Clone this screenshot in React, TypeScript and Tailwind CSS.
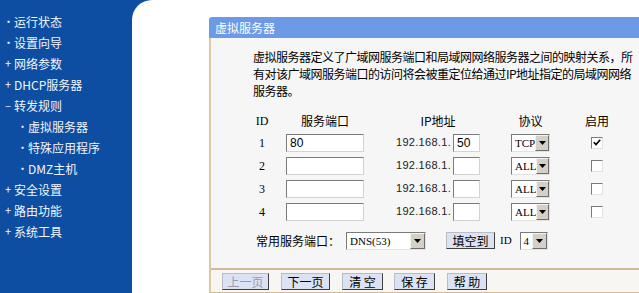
import React from 'react'

const font = { fontFamily: '"Noto Sans CJK SC", "Liberation Sans", sans-serif' }

// 左侧菜单
const menu: { mark: '•' | '+' | '-'; label: string; sub?: boolean }[] = [
  { mark: '•', label: '运行状态' },
  { mark: '•', label: '设置向导' },
  { mark: '+', label: '网络参数' },
  { mark: '+', label: 'DHCP服务器' },
  { mark: '-', label: '转发规则' },
  { mark: '•', label: '虚拟服务器', sub: true },
  { mark: '•', label: '特殊应用程序', sub: true },
  { mark: '•', label: 'DMZ主机', sub: true },
  { mark: '+', label: '安全设置' },
  { mark: '+', label: '路由功能' },
  { mark: '+', label: '系统工具' },
]

const rows = [
  { id: 1, port: '80', host: '50', proto: 'TCP', on: true },
  { id: 2, port: '', host: '', proto: 'ALL', on: false },
  { id: 3, port: '', host: '', proto: 'ALL', on: false },
  { id: 4, port: '', host: '', proto: 'ALL', on: false },
]

function TextBox({ value, className }: { value: string; className: string }) {
  return (
    <div
      className={`h-[18px] bg-white border border-t-[#7b7b7b] border-l-[#7b7b7b] border-b-[#d6d3ce] border-r-[#d6d3ce] px-[3px] text-[12px] leading-[16px] text-black ${className}`}
      style={{ fontFamily: '"Liberation Sans", sans-serif' }}
    >
      {value}
    </div>
  )
}

function Select({ value, className }: { value: string; className: string }) {
  return (
    <div
      className={`h-[18px] flex bg-white border border-t-[#7b7b7b] border-l-[#7b7b7b] border-b-[#e4e2de] border-r-[#e4e2de] ${className}`}
    >
      <div
        className="flex-1 pl-[3px] text-[11px] leading-[16px] text-black whitespace-nowrap"
        style={{ fontFamily: '"Liberation Serif", serif' }}
      >
        {value}
      </div>
      <div className="w-[15px] h-[16px] bg-[#d4d0c8] border border-t-[#f4f3f0] border-l-[#f4f3f0] border-b-[#6e6e6e] border-r-[#6e6e6e] flex items-center justify-center">
        <svg width="7" height="4" viewBox="0 0 7 4">
          <path d="M0 0 H7 L3.5 4 Z" fill="#000" />
        </svg>
      </div>
    </div>
  )
}

function CheckBox({ checked }: { checked: boolean }) {
  return (
    <div className="w-[12px] h-[12px] bg-white border border-t-[#7b7b7b] border-l-[#7b7b7b] border-b-[#e4e2de] border-r-[#e4e2de] flex items-center justify-center">
      {checked && (
        <svg width="8" height="7" viewBox="0 0 8 7">
          <path d="M0.8 3.2 L3 5.6 L7.2 0.8" stroke="#000" strokeWidth="1.6" fill="none" />
        </svg>
      )}
    </div>
  )
}

function Btn({ label, disabled, className }: { label: string; disabled?: boolean; className: string }) {
  return (
    <div
      className={`h-[17px] bg-[#dbe2f3] border border-t-[#b8bcc8] border-l-[#b8bcc8] border-b-[#3f3f3f] border-r-[#3f3f3f] text-[12px] leading-[15px] text-center whitespace-nowrap ${
        disabled ? 'text-[#9a9cab]' : 'text-black'
      } ${className}`}
    >
      {label}
    </div>
  )
}

export default function App() {
  return (
    <div className="w-[639px] h-[293px] flex bg-[#0d4ea3] overflow-hidden" style={font}>
      {/* Sidebar */}
      <div className="w-[132px] shrink-0 pt-[11px] text-[12px] leading-[21px] text-[#f2f5fb]">
        {menu.map(item => (
          <div key={item.label} className={`flex items-center whitespace-nowrap ${item.sub ? 'pl-[17px]' : 'pl-[3px]'}`}>
            <span className="w-[10px] text-center text-[11px]">{item.mark === '-' ? '–' : item.mark}</span>
            <span className="ml-[1px]">{item.label}</span>
          </div>
        ))}
      </div>

      {/* Main */}
      <div className="flex-1 bg-white rounded-tl-[20px] pl-[77px] pt-[17px] overflow-hidden">
        <div className="w-[460px]">
          <div className="h-[21px] bg-[#6c9ae6] rounded-tl-[3px] pl-[6px] text-[12px] leading-[21px] text-white">
            虚拟服务器
          </div>
          <div className="border-l-2 border-[#dcc8a3] bg-[#f6f6f6] text-[12px] text-black">
            <div className="pl-[42px] pt-[10px] leading-[17px] whitespace-nowrap tracking-[-0.5px]">
              虚拟服务器定义了广域网服务端口和局域网网络服务器之间的映射关系，所
              <br />
              有对该广域网服务端口的访问将会被重定位给通过IP地址指定的局域网网络
              <br />
              服务器。
            </div>

            {/* 表头 */}
            <div className="mt-[12px] h-[20px] flex items-center pl-[37px]">
              <div className="w-[28px] text-center" style={{ fontFamily: '"Liberation Serif", serif' }}>ID</div>
              <div className="ml-[10px] w-[78px] text-center">服务端口</div>
              <div className="ml-[32px] w-[84px] text-center">IP地址</div>
              <div className="ml-[31px] w-[39px] text-center">协议</div>
              <div className="ml-[34px] w-[26px] text-center">启用</div>
            </div>

            {rows.map(r => (
              <div key={r.id} className="h-[23px] flex items-center pl-[37px]">
                <div className="w-[28px] text-center" style={{ fontFamily: '"Liberation Serif", serif' }}>{r.id}</div>
                <TextBox value={r.port} className="ml-[10px] w-[78px]" />
                <div className="ml-[32px] w-[84px] flex items-center">
                  <span
                    className="w-[55px] whitespace-nowrap text-[11px] tracking-[0.3px] text-[#222]"
                    style={{ fontFamily: '"Liberation Sans", sans-serif' }}
                  >
                    192.168.1.
                  </span>
                  <TextBox value={r.host} className="ml-[2px] w-[27px]" />
                </div>
                <Select value={r.proto} className="ml-[31px] w-[39px]" />
                <div className="ml-[34px] w-[26px] flex justify-center">
                  <CheckBox checked={r.on} />
                </div>
              </div>
            ))}

            {/* 常用服务端口 */}
            <div className="mt-[6px] h-[23px] flex items-center pl-[45px]">
              <span className="w-[90px] whitespace-nowrap">常用服务端口：</span>
              <Select value="DNS(53)" className="w-[80px]" />
              <Btn label="填空到" className="ml-[20px] w-[49px]" />
              <span className="ml-[5px] text-[11px]" style={{ fontFamily: '"Liberation Serif", serif' }}>ID</span>
              <Select value="4" className="ml-[8px] w-[28px]" />
            </div>

            <div className="mt-[15px] h-[3px] bg-[#fdf6e8] border-b-2 border-[#d2ba97]" />

            <div className="h-[24px] flex items-center pl-[11px] bg-[#f7f6f3] border-b-2 border-[#d2ba97]">
              <Btn label="上一页" disabled className="w-[47px]" />
              <Btn label="下一页" className="ml-[12px] w-[49px]" />
              <Btn label="清 空" className="ml-[12px] w-[41px]" />
              <Btn label="保 存" className="ml-[11px] w-[41px]" />
              <Btn label="帮 助" className="ml-[12px] w-[40px]" />
            </div>
          </div>
        </div>
      </div>
    </div>
  )
}
